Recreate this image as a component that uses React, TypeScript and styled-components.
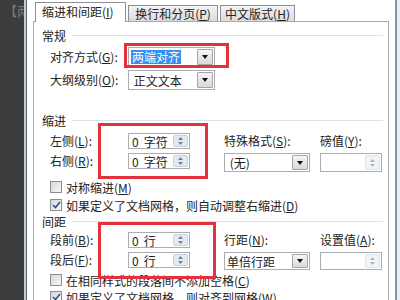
import React from 'react';
import styled, { createGlobalStyle } from 'styled-components';

const GlobalStyle = createGlobalStyle`
  html, body { margin: 0; padding: 0; background: #3c3c3c; }
  body {
    font-family: "Noto Sans CJK SC", "Noto Sans", sans-serif;
    font-size: 12px;
    color: #222;
  }
  * { box-sizing: border-box; }
`;

const Screen = styled.div`
  display: flex;
  width: 400px;
  height: 300px;
  overflow: hidden;
`;

const DocStrip = styled.div`
  width: 24px;
  flex: none;
  background: #3c3c3c;
  color: #787878;
  font-size: 13px;
  line-height: 14px;
  padding: 4px 0 0 4px;
  white-space: nowrap;
  overflow: hidden;
`;

const FrameLeft = styled.div`
  width: 3px;
  flex: none;
  border-left: 2px solid #c3c9cf;
  border-right: 1px solid #59636e;
`;

const FrameRight = styled.div`
  width: 5px;
  flex: none;
  border-left: 2px solid #8193a8;
  background: #e9eef3;
`;

const Dialog = styled.div`
  flex: 1;
  display: flex;
  flex-direction: column;
  background: #fff;
  padding: 0 6px;
`;

const TabStrip = styled.div`
  display: flex;
  align-items: flex-end;
  gap: 2px;
  height: 21px;
  padding-left: 2px;
  flex: none;
`;

const Tab = styled.div<{ $active?: boolean; $w: number }>`
  position: relative;
  z-index: 2;
  width: ${p => p.$w}px;
  height: ${p => (p.$active ? 20 : 16)}px;
  margin-bottom: ${p => (p.$active ? -1 : 0)}px;
  border: 1px solid #8c8f96;
  border-bottom: none;
  background: ${p => (p.$active ? '#fff' : 'linear-gradient(#f3f3f3, #dcdcdc)')};
  display: flex;
  align-items: center;
  justify-content: ${p => (p.$active ? 'flex-start' : 'center')};
  padding-left: ${p => (p.$active ? 6 : 0)}px;
  padding-bottom: ${p => (p.$active ? 2 : 0)}px;
  white-space: nowrap;
`;

const Page = styled.div`
  position: relative;
  flex: none;
  height: 300px;
  border: 1px solid #a9a9a9;
  display: flex;
  flex-direction: column;
  padding: 6px 5px 0 8px;
`;

const Header = styled.div<{ $mt: number }>`
  display: flex;
  align-items: center;
  height: 14px;
  margin-top: ${p => p.$mt}px;
  white-space: nowrap;
`;

const Rule = styled.div`
  flex: 1;
  height: 1px;
  margin-left: 6px;
  background: #dde3e8;
`;

const FieldRow = styled.div<{ $mt: number }>`
  display: flex;
  align-items: center;
  height: 20px;
  margin: ${p => p.$mt}px 0 0 8px;
`;

const Label = styled.div<{ $w?: number }>`
  width: ${p => (p.$w ? `${p.$w}px` : 'auto')};
  flex: none;
  height: 16px;
  line-height: 16px;
  align-self: start;
  white-space: nowrap;
`;

const RowLabel = styled(Label)`
  align-self: center;
  height: auto;
`;

const Select = styled.div<{ $w: number; $h: number }>`
  width: ${p => p.$w}px;
  height: ${p => p.$h}px;
  border: 1px solid #abadb3;
  background: #fff;
  display: flex;
  align-items: center;
  padding-left: 2px;
  white-space: nowrap;
`;

const Highlight = styled.span`
  background: #3390f0;
  color: #fff;
  line-height: 14px;
  padding: 0 1px;
`;

const DropButton = styled.div`
  width: 16px;
  align-self: stretch;
  margin: 1px 1px 1px auto;
  border: 1px solid #a5a5a5;
  border-radius: 1px;
  background: linear-gradient(#f6f6f6, #d9d9d9);
  display: flex;
  align-items: center;
  justify-content: center;
  &::after {
    content: '';
    border-left: 3.5px solid transparent;
    border-right: 3.5px solid transparent;
    border-top: 4px solid #111;
  }
`;

const Spinner = styled.div<{ $h: number }>`
  width: 62px;
  height: ${p => p.$h}px;
  border: 1px solid #abadb3;
  background: #fff;
  display: flex;
  align-items: center;
  padding-left: 3px;
  align-self: start;
  white-space: nowrap;
`;

const Num = styled.span`
  margin-right: 5px;
`;

const SpinBox = styled.div<{ $muted?: boolean }>`
  margin: 0 1px 0 auto;
  width: 15px;
  height: calc(100% - 2px);
  border: 1px solid ${p => (p.$muted ? '#dde4ea' : '#c9d3de')};
  border-radius: 2px;
  background: ${p => (p.$muted ? '#f1f4f7' : '#e4eaf1')};
  display: flex;
  align-items: center;
  justify-content: center;
`;

const SpinArrows = ({ muted }: { muted?: boolean }) => (
  <SpinBox $muted={muted}>
    <svg width="7" height="10" viewBox="0 0 7 10">
      <path d="M3.5 1 L6 4 L1 4 Z" fill={muted ? '#a9b6c6' : '#6d819c'} />
      <path d="M3.5 9 L6 6 L1 6 Z" fill={muted ? '#a9b6c6' : '#6d819c'} />
    </svg>
  </SpinBox>
);

const FieldGrid = styled.div<{ $mt: number; $row2: number }>`
  display: grid;
  grid-template-columns: 78px 96px 96px 62px;
  grid-template-rows: 16px ${p => p.$row2}px;
  row-gap: 4px;
  margin: ${p => p.$mt}px 0 0 8px;
`;

const CheckRow = styled.div<{ $mt: number }>`
  display: flex;
  align-items: center;
  gap: 4px;
  height: 14px;
  margin: ${p => p.$mt}px 0 0 8px;
  white-space: nowrap;
`;

const Box = styled.div`
  width: 12px;
  height: 12px;
  flex: none;
  border: 1px solid #8e8f8f;
  background: linear-gradient(135deg, #d7d7d7, #f7f7f7);
  display: flex;
  align-items: center;
  justify-content: center;
`;

const Annotation = styled.div<{ $l: number; $t: number; $w: number; $h: number }>`
  position: absolute;
  left: ${p => p.$l}px;
  top: ${p => p.$t}px;
  width: ${p => p.$w}px;
  height: ${p => p.$h}px;
  border: 3px solid #e3323c;
  pointer-events: none;
  z-index: 3;
`;

const Check = ({ checked, children, mt }: { checked?: boolean; children: React.ReactNode; mt: number }) => (
  <CheckRow $mt={mt}>
    <Box>
      {checked && (
        <svg width="9" height="8" viewBox="0 0 9 8">
          <path d="M1 4 L3.5 6.5 L8 1" stroke="#2e4f94" strokeWidth="1.6" fill="none" />
        </svg>
      )}
    </Box>
    <span>{children}</span>
  </CheckRow>
);

const Key = ({ k }: { k: string }) => (
  <>
    (<u>{k}</u>)
  </>
);

export default function App() {
  return (
    <Screen>
      <GlobalStyle />
      <DocStrip>【两</DocStrip>
      <FrameLeft />
      <Dialog>
        <TabStrip>
          <Tab $active $w={91}>缩进和间距<Key k="I" /></Tab>
          <Tab $w={90}>换行和分页<Key k="P" /></Tab>
          <Tab $w={75}>中文版式<Key k="H" /></Tab>
        </TabStrip>
        <Page>
          <Header $mt={0}>常规<Rule /></Header>
          <FieldRow $mt={5}>
            <RowLabel $w={78}>对齐方式<Key k="G" />:</RowLabel>
            <Select $w={87} $h={20}>
              <Highlight>两端对齐</Highlight>
              <DropButton />
            </Select>
          </FieldRow>
          <FieldRow $mt={3}>
            <RowLabel $w={78}>大纲级别<Key k="O" />:</RowLabel>
            <Select $w={87} $h={20}>
              <span>&nbsp;正文文本</span>
              <DropButton />
            </Select>
          </FieldRow>

          <Header $mt={23}>缩进<Rule /></Header>
          <FieldGrid $mt={6} $row2={19}>
            <Label>左侧<Key k="L" />:</Label>
            <Spinner $h={16}><Num>0</Num>字符<SpinArrows /></Spinner>
            <Label>特殊格式<Key k="S" />:</Label>
            <Label>磅值<Key k="Y" />:</Label>
            <Label>右侧<Key k="R" />:</Label>
            <Spinner $h={16}><Num>0</Num>字符<SpinArrows /></Spinner>
            <Select $w={86} $h={19}>
              <span>&nbsp;(无)</span>
              <DropButton />
            </Select>
            <Spinner $h={19}><SpinArrows muted /></Spinner>
          </FieldGrid>
          <Check mt={8}>对称缩进<Key k="M" /></Check>
          <Check mt={4} checked>如果定义了文档网格，则自动调整右缩进<Key k="D" /></Check>

          <Header $mt={2}>间距<Rule /></Header>
          <FieldGrid $mt={4} $row2={18}>
            <Label>段前<Key k="B" />:</Label>
            <Spinner $h={16}><Num>0</Num>行<SpinArrows /></Spinner>
            <Label>行距<Key k="N" />:</Label>
            <Label>设置值<Key k="A" />:</Label>
            <Label>段后<Key k="F" />:</Label>
            <Spinner $h={16}><Num>0</Num>行<SpinArrows /></Spinner>
            <Select $w={86} $h={18}>
              <span>单倍行距</span>
              <DropButton />
            </Select>
            <Spinner $h={18}><SpinArrows muted /></Spinner>
          </FieldGrid>
          <Check mt={3}>在相同样式的段落间不添加空格<Key k="C" /></Check>
          <Check mt={3} checked>如果定义了文档网格，则对齐到网格<Key k="W" /></Check>

          <Annotation $l={90} $t={21} $w={105} $h={25} />
          <Annotation $l={64} $t={101} $w={110} $h={56} />
          <Annotation $l={64} $t={200} $w={118} $h={57} />
        </Page>
      </Dialog>
      <FrameRight />
    </Screen>
  );
}
